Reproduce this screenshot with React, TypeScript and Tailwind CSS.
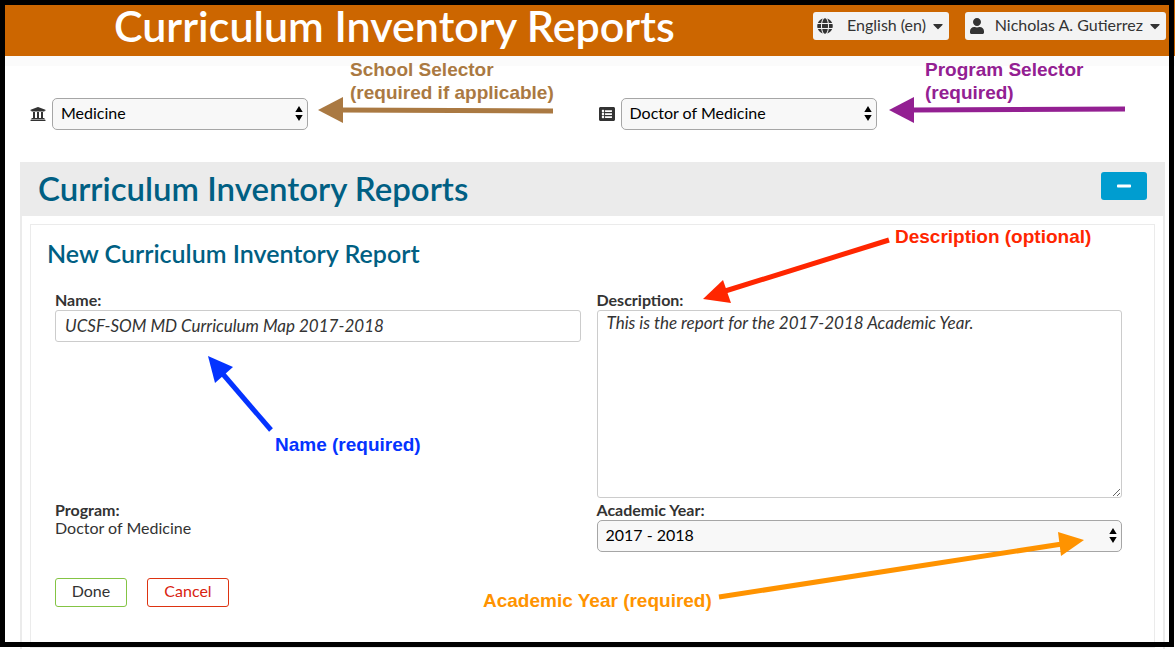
import React from "react";
import { FaCaretDown, FaGlobe, FaListAlt, FaMinus, FaUniversity, FaUser } from "react-icons/fa";

type SelectProps = { id: string; label?: string; value: string; className?: string };

function SelectBox({ id, label, value, className = "" }: SelectProps) {
  return (
    <div className={`relative ${className}`}>
      <select
        id={id}
        aria-label={label}
        defaultValue={value}
        className="block h-8 w-full appearance-none rounded-[5px] border border-[#a6a6a6] bg-[#f8f8f8] pr-6 pb-[3px] pl-2 text-base leading-5 text-black"
      >
        <option>{value}</option>
      </select>
      <svg
        aria-hidden="true"
        viewBox="0 0 8 15"
        className="pointer-events-none absolute top-2 right-[5px] h-[15px] w-2"
      >
        <path d="M4 0 L7.7 6 H0.3 Z M4 15 L0.3 9 H7.7 Z" fill="#000" />
      </svg>
    </div>
  );
}

type ArrowProps = { line: [number, number, number, number]; head: string; color: string };

function Arrow({ line, head, color }: ArrowProps) {
  return (
    <g stroke={color} fill={color}>
      <line x1={line[0]} y1={line[1]} x2={line[2]} y2={line[3]} strokeWidth="5" />
      <polygon points={head} stroke="none" />
    </g>
  );
}

function Annotations() {
  const note = "absolute text-[19px] leading-[23px] font-bold whitespace-nowrap";
  return (
    <div className="pointer-events-none absolute inset-0 font-['Liberation_Sans',sans-serif]">
      <svg aria-hidden="true" width="1175" height="649" className="absolute top-0 left-0">
        <Arrow color="#aa7942" line={[340, 110, 553, 111]} head="318,110 343,97 343,123" />
        <Arrow color="#932092" line={[912, 110, 1125, 109]} head="889,110 914,97 914,123" />
        <Arrow color="#ff2600" line={[889, 240, 722, 292]} head="703,299 723,280 731,303" />
        <Arrow color="#0433ff" line={[271, 430, 222, 373]} head="208,356 233,367 215,383" />
        <Arrow color="#ff9300" line={[719, 597, 1062, 544]} head="1084,540 1058,532 1061,556" />
      </svg>
      <p className={`${note} top-[58px] left-[350px] text-[#aa7942]`}>
        School Selector
        <br />
        (required if applicable)
      </p>
      <p className={`${note} top-[58px] left-[925px] text-[#932092]`}>
        Program Selector
        <br />
        (required)
      </p>
      <p className={`${note} top-[225px] left-[895px] text-[#ff2600]`}>Description (optional)</p>
      <p className={`${note} top-[433px] left-[275px] text-[#0433ff]`}>Name (required)</p>
      <p className={`${note} top-[589px] left-[483px] text-[#ff9300]`}>Academic Year (required)</p>
      <div className="absolute top-0 right-px bottom-[2px] left-0 border-[5px] border-black" />
    </div>
  );
}

export default function App() {
  const menuButton =
    "flex h-7 items-center justify-between rounded-[3px] bg-[#f3f3f3] pr-[3px] pl-1 text-base text-[#333]";
  const label = "block pb-px font-bold";
  return (
    <div className="relative min-h-screen bg-white font-['Lato',sans-serif] text-base leading-[18px] text-[#333]">
      <header className="flex h-14 items-start justify-between bg-[#cc6600] pr-[9px] pl-[114px]">
        <h1 className="text-[43px] leading-[52px] font-semibold whitespace-nowrap text-white">
          Curriculum Inventory Reports
        </h1>
        <nav className="flex gap-4 pt-3">
          <button type="button" className={`${menuButton} w-[136px]`}>
            <FaGlobe />
            <span className="flex items-center gap-1">
              <span className="pb-[2px]">English (en)</span> <FaCaretDown />
            </span>
          </button>
          <button type="button" className={`${menuButton} w-[201px]`}>
            <FaUser />
            <span className="flex items-center gap-1">
              <span className="pb-[2px]">Nicholas A. Gutierrez</span> <FaCaretDown />
            </span>
          </button>
        </nav>
      </header>
      <div className="h-[10px] bg-[#fbfbfb]" />

      <main>
        <div className="grid grid-cols-2 pt-8 pr-2 pb-8 pl-[30px]">
          <div className="flex items-center gap-[6px]">
            <FaUniversity />
            <SelectBox id="school" label="School" value="Medicine" className="w-64" />
          </div>
          <div className="flex items-center gap-[6px]">
            <FaListAlt />
            <SelectBox id="program" label="Program" value="Doctor of Medicine" className="w-64" />
          </div>
        </div>

        <section className="mr-[10px] ml-5 border-x-2 border-[#ebebeb] pb-px">
          <div className="flex h-[54px] items-center justify-between bg-[#ebebeb] px-4 pb-1">
            <h2 className="pt-[2px] text-[33px] leading-10 font-semibold text-[#005f83]">
              Curriculum Inventory Reports
            </h2>
            <button
              type="button"
              aria-label="Collapse"
              className="mb-[2px] flex h-7 w-[46px] items-center justify-center rounded-[3px] bg-[#009dd0] text-white"
            >
              <FaMinus />
            </button>
          </div>

          <form className="mx-2 mt-2 border border-[#ebebeb] pr-8 pb-10 pl-6" onSubmit={(e) => e.preventDefault()}>
            <h3 className="-ml-2 pt-[10px] text-[25px] leading-9 font-semibold text-[#005f83]">
              New Curriculum Inventory Report
            </h3>
            <div className="grid grid-cols-2 gap-x-4 gap-y-[3px] pt-5">
              <div>
                <label htmlFor="name" className={label}>
                  Name:
                </label>
                <input
                  id="name"
                  defaultValue="UCSF-SOM MD Curriculum Map 2017-2018"
                  className="block h-8 w-full rounded-[3px] border border-[#ccc] px-[9px] pb-[2px] text-[17px] italic"
                />
              </div>
              <div>
                <label htmlFor="description" className={label}>
                  Description:
                </label>
                <textarea
                  id="description"
                  defaultValue="This is the report for the 2017-2018 Academic Year."
                  className="block h-[188px] w-full rounded-[3px] border border-[#ccc] px-[9px] py-[3px] text-[17px] italic"
                />
              </div>
              <div>
                <p className="font-bold">Program:</p>
                <p>Doctor of Medicine</p>
              </div>
              <div>
                <label htmlFor="year" className={label}>
                  Academic Year:
                </label>
                <SelectBox id="year" value="2017 - 2018" />
              </div>
            </div>
            <div className="flex gap-5 pt-[26px]">
              <button type="submit" className="h-[29px] w-[72px] rounded-[3px] border border-[#84c444] pb-[3px]">
                Done
              </button>
              <button
                type="button"
                className="h-[29px] w-[82px] rounded-[3px] border border-[#dd3311] pb-[3px] text-[#d9230f]"
              >
                Cancel
              </button>
            </div>
          </form>
        </section>
      </main>
      <Annotations />
    </div>
  );
}
